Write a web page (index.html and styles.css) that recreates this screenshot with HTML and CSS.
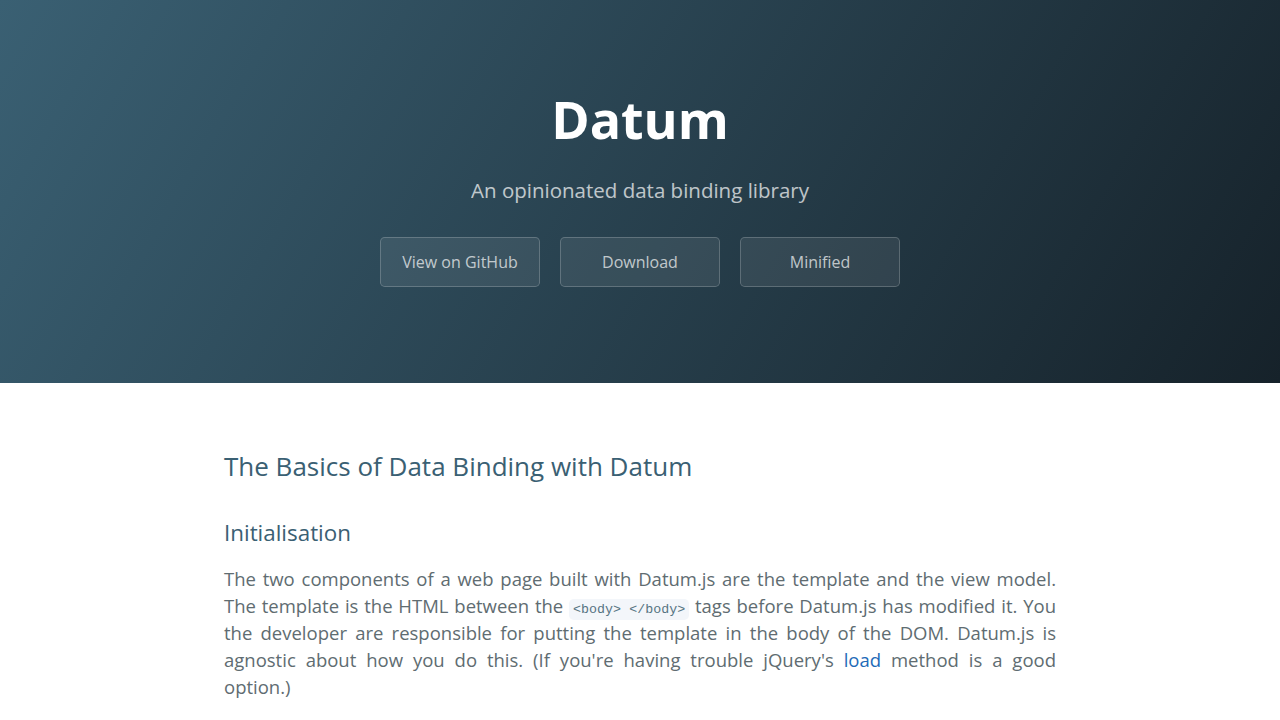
FILE: index.html
```html
<!DOCTYPE html>
<html lang="en">
<head>
<meta charset="UTF-8">
<title>Datum</title>
<link rel="stylesheet" href="styles.css">
</head>
<body>
<section class="page-header">
  <h1 class="project-name">Datum</h1>
  <h2 class="project-tagline">An opinionated data binding library</h2>
  <div class="btn-row">
    <a href="#" class="btn">View on GitHub</a>
    <a href="#" class="btn">Download</a>
    <a href="#" class="btn">Minified</a>
  </div>
</section>
<section class="main-content">
  <h1 class="section-title">The Basics of Data Binding with Datum</h1>
  <h2 class="sub-title">Initialisation</h2>
  <p class="body-text">The two components of a web page built with Datum.js are the template and the view model. The template is the HTML between the <code class="inline-code">&lt;body&gt; &lt;/body&gt;</code> tags before Datum.js has modified it. You the developer are responsible for putting the template in the body of the DOM. Datum.js is agnostic about how you do this. (If you're having trouble jQuery's <a href="#" class="link">load</a> method is a good option.)</p>
</section>
</body>
</html>
```
FILE: styles.css
```css
* { box-sizing: border-box; }
html, body { margin: 0; padding: 0; }
body {
  font-family: "Open Sans", "Helvetica Neue", Helvetica, Arial, sans-serif;
  font-size: 16px;
  line-height: 1.5;
  color: #606c71;
  background: #fff;
}
.page-header {
  height: 383px;
  padding: 80px 96px 0;
  text-align: center;
  color: #fff;
  background-color: #16222a;
  background-image: linear-gradient(120deg, #3a6073, #16222a);
}
.project-name {
  margin: 0 0 1.6px;
  font-size: 52px;
  font-weight: 700;
  line-height: 1.5;
}
.project-tagline {
  margin: 17px 0 32px;
  font-size: 20.5px;
  font-weight: 400;
  line-height: 30px;
  opacity: 0.7;
}
.btn-row {
  display: flex;
  justify-content: center;
  gap: 20px;
}
.btn {
  display: block;
  width: 160px;
  padding: 12px 16px;
  font-size: 16px;
  line-height: 24px;
  color: rgba(255, 255, 255, 0.7);
  text-decoration: none;
  background-color: rgba(255, 255, 255, 0.08);
  border: 1px solid rgba(255, 255, 255, 0.2);
  border-radius: 4.8px;
}
.main-content {
  max-width: 1024px;
  margin: 0 auto;
  padding: 64px 96px;
  font-size: 18.5px;
  word-wrap: break-word;
}
.section-title {
  margin: 0;
  font-size: 26px;
  font-weight: 400;
  line-height: 39px;
  color: #3a6073;
}
.sub-title {
  margin: 30px 0 15px;
  font-size: 22.4px;
  font-weight: 400;
  line-height: 34px;
  color: #3a6073;
}
.body-text {
  margin: 0 0 16px;
  line-height: 27px;
  word-spacing: 0.6px;
  text-align: justify;
}
.inline-code {
  padding: 3px 4px;
  font-family: Courier, "Nimbus Mono PS", "FreeMono", "Liberation Mono", monospace;
  font-size: 13.3px;
  line-height: 1;
  word-spacing: 0;
  color: #567482;
  background-color: #f3f6fa;
  border-radius: 4.8px;
}
.link {
  color: #1e6bb8;
  text-decoration: none;
}
```
